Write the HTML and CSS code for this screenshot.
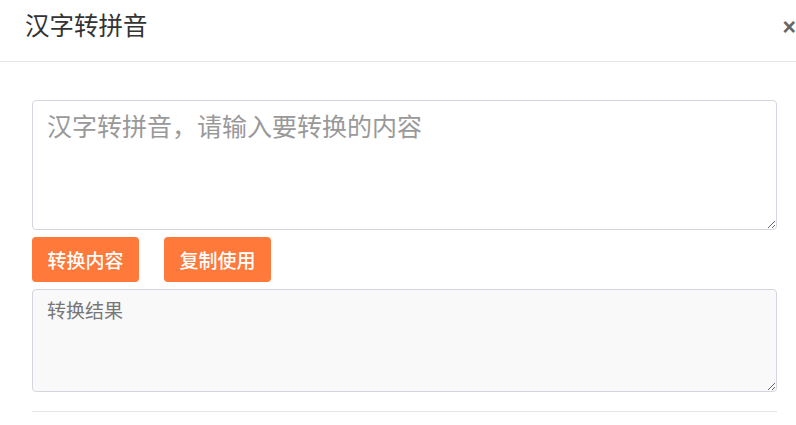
FILE: index.html
```html
<!DOCTYPE html>
<html lang="zh-CN">

<head>
    <meta charset="UTF-8">
    <meta name="viewport" content="width=device-width, initial-scale=1.0">
    <title>汉字转拼音</title>
    <link rel="stylesheet" href="styles.css">
</head>

<body>
    <div class="modal">
        <div class="modal-header">
            <h4 class="modal-title">汉字转拼音</h4>
            <span class="close">&times;</span>
        </div>
        <div class="modal-body">
            <textarea class="input" placeholder="汉字转拼音，请输入要转换的内容"></textarea>
            <div class="btns">
                <button class="btn">转换内容</button>
                <button class="btn">复制使用</button>
            </div>
            <textarea class="result" readonly placeholder="转换结果"></textarea>
            <div class="line"></div>
        </div>
    </div>
</body>

</html>
```

FILE: styles.css
```css
* {
    margin: 0;
    padding: 0;
    box-sizing: border-box;
}

html,
body {
    overflow: hidden;
    background: #fff;
}

body {
    font-family: "Noto Sans CJK SC", "Liberation Sans", sans-serif;
    color: #333;
}

.modal {
    width: 809px;
}

.modal-header {
    height: 62px;
    padding: 7px 13px 0 25px;
    border-bottom: 1px solid #e5e5e5;
    display: flex;
    justify-content: space-between;
    align-items: flex-start;
}

.modal-title {
    font-size: 24.5px;
    font-weight: normal;
    line-height: 36px;
    color: #333;
}

/* 关闭按钮在右侧被裁掉一部分 */
.close {
    font-family: "Liberation Sans", sans-serif;
    font-size: 23px;
    font-weight: bold;
    line-height: 40px;
    color: #666;
    cursor: pointer;
}

.modal-body {
    padding: 38px 32px 0;
}

textarea {
    display: block;
    width: 100%;
    border: 1px solid #d3d7dd;
    border-radius: 4px;
    padding: 6px 14px;
    font-family: "Noto Sans CJK SC", sans-serif;
    outline: none;
}

.input {
    height: 130px;
    font-size: 25px;
    line-height: 36px;
    color: #555;
}

.input::placeholder {
    color: #999;
}

.result {
    height: 103px;
    margin-top: 7px;
    font-size: 19px;
    line-height: 28px;
    background-color: #f9f9f9;
}

.result::placeholder {
    color: #777;
}

.btns {
    display: flex;
    gap: 25px;
    margin-top: 7px;
}

.btn {
    height: 45px;
    padding: 0 15.5px;
    border: none;
    border-radius: 4px;
    background-color: #ff793b;
    color: #fff;
    font-family: "Noto Sans CJK SC", sans-serif;
    font-size: 19px;
    font-weight: 500;
    cursor: pointer;
}

.line {
    height: 1px;
    margin-top: 19px;
    background-color: #e5e5e5;
}
```
